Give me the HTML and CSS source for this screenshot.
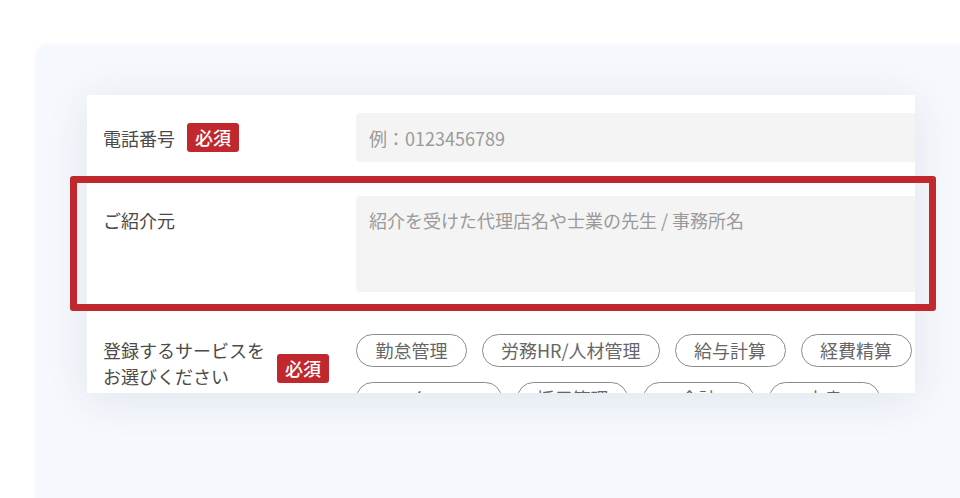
FILE: index.html
```html
<!DOCTYPE html>
<html lang="ja">
<head>
<meta charset="utf-8">
<title>フォーム</title>
<link rel="stylesheet" href="styles.css">
</head>
<body>
<div class="panel">
  <div class="card">
    <div class="row row-tel">
      <div class="label"><span>電話番号</span><span class="req">必須</span></div>
      <input class="field" type="text" placeholder="例：0123456789">
    </div>
    <div class="row row-ref">
      <div class="label label-top"><span>ご紹介元</span></div>
      <textarea class="field area" placeholder="紹介を受けた代理店名や士業の先生 / 事務所名"></textarea>
    </div>
    <div class="row row-svc">
      <div class="label label-svc">
        <div class="multi">登録するサービスを<br>お選びください<br>（複数選択可）</div>
        <span class="req req-svc">必須</span>
      </div>
      <div class="chips">
        <span class="chip">勤怠管理</span>
        <span class="chip">労務HR/人材管理</span>
        <span class="chip">給与計算</span>
        <span class="chip">経費精算</span>
        <span class="chip">ワークフロー</span>
        <span class="chip">採用管理</span>
        <span class="chip">会計</span>
        <span class="chip">文書</span>
      </div>
    </div>
  </div>
  <div class="highlight"></div>
</div>
</body>
</html>
```

FILE: styles.css
```css
* { box-sizing: border-box; }
html, body { margin: 0; padding: 0; background: #ffffff; }
body {
  width: 960px;
  height: 498px;
  overflow: hidden;
  font-family: "Noto Sans CJK JP", "Noto Sans", sans-serif;
  color: #4a4a4a;
}
.panel {
  position: relative;
  margin: 45px 0 0 36px;
  height: 453px;
  background: #f5f8fc;
  border-top-left-radius: 12px;
  box-shadow: 0 0 4px rgba(60, 80, 120, 0.06);
  padding: 50px 0 0 51px;
}
.card {
  width: 828px;
  height: 298px;
  overflow: hidden;
  background: #ffffff;
  padding: 18px 0 0 16px;
  box-shadow: 0 6px 40px rgba(50, 70, 130, 0.1);
}
.row {
  display: grid;
  grid-template-columns: 253px 1fr;
}
.row-tel { align-items: center; margin-bottom: 34px; }
.row-ref { align-items: start; margin-bottom: 42px; }
.row-svc { align-items: start; }
.label {
  display: flex;
  align-items: center;
  gap: 12px;
  font-size: 18px;
  line-height: 26px;
  color: #4a4a4a;
}
.label-top { padding-top: 11px; }
.label-svc { align-items: flex-start; }
.multi { margin-top: 3px; white-space: nowrap; }
.req {
  display: inline-block;
  background: #c0282d;
  color: #fff;
  font-size: 18px;
  font-weight: 500;
  line-height: 29px;
  height: 29px;
  padding: 0 8px;
  border-radius: 3px;
}
.req-svc { margin-top: 20px; }
.field {
  display: block;
  width: 100%;
  border: none;
  outline: none;
  background: #f4f4f4;
  border-radius: 4px 0 0 4px;
  font-family: inherit;
  font-size: 18px;
  line-height: 26px;
  color: #444;
  padding: 11px 13px;
  height: 49px;
}
.area {
  height: 96px;
  resize: none;
  padding: 11px 13px;
}
.field::placeholder { color: #9a9a9a; opacity: 1; }
.chips {
  display: flex;
  flex-wrap: wrap;
  gap: 15px 15px;
}
.chip {
  display: inline-block;
  min-width: 111px;
  height: 33px;
  padding: 0 18px;
  border: 1.5px solid #8b8b8b;
  border-radius: 999px;
  font-size: 18px;
  line-height: 30px;
  color: #666;
  text-align: center;
  white-space: nowrap;
}
.highlight {
  position: absolute;
  left: 34px;
  top: 131px;
  width: 866px;
  height: 135px;
  border: 7px solid #c0282d;
  border-radius: 3px;
  pointer-events: none;
}
```
